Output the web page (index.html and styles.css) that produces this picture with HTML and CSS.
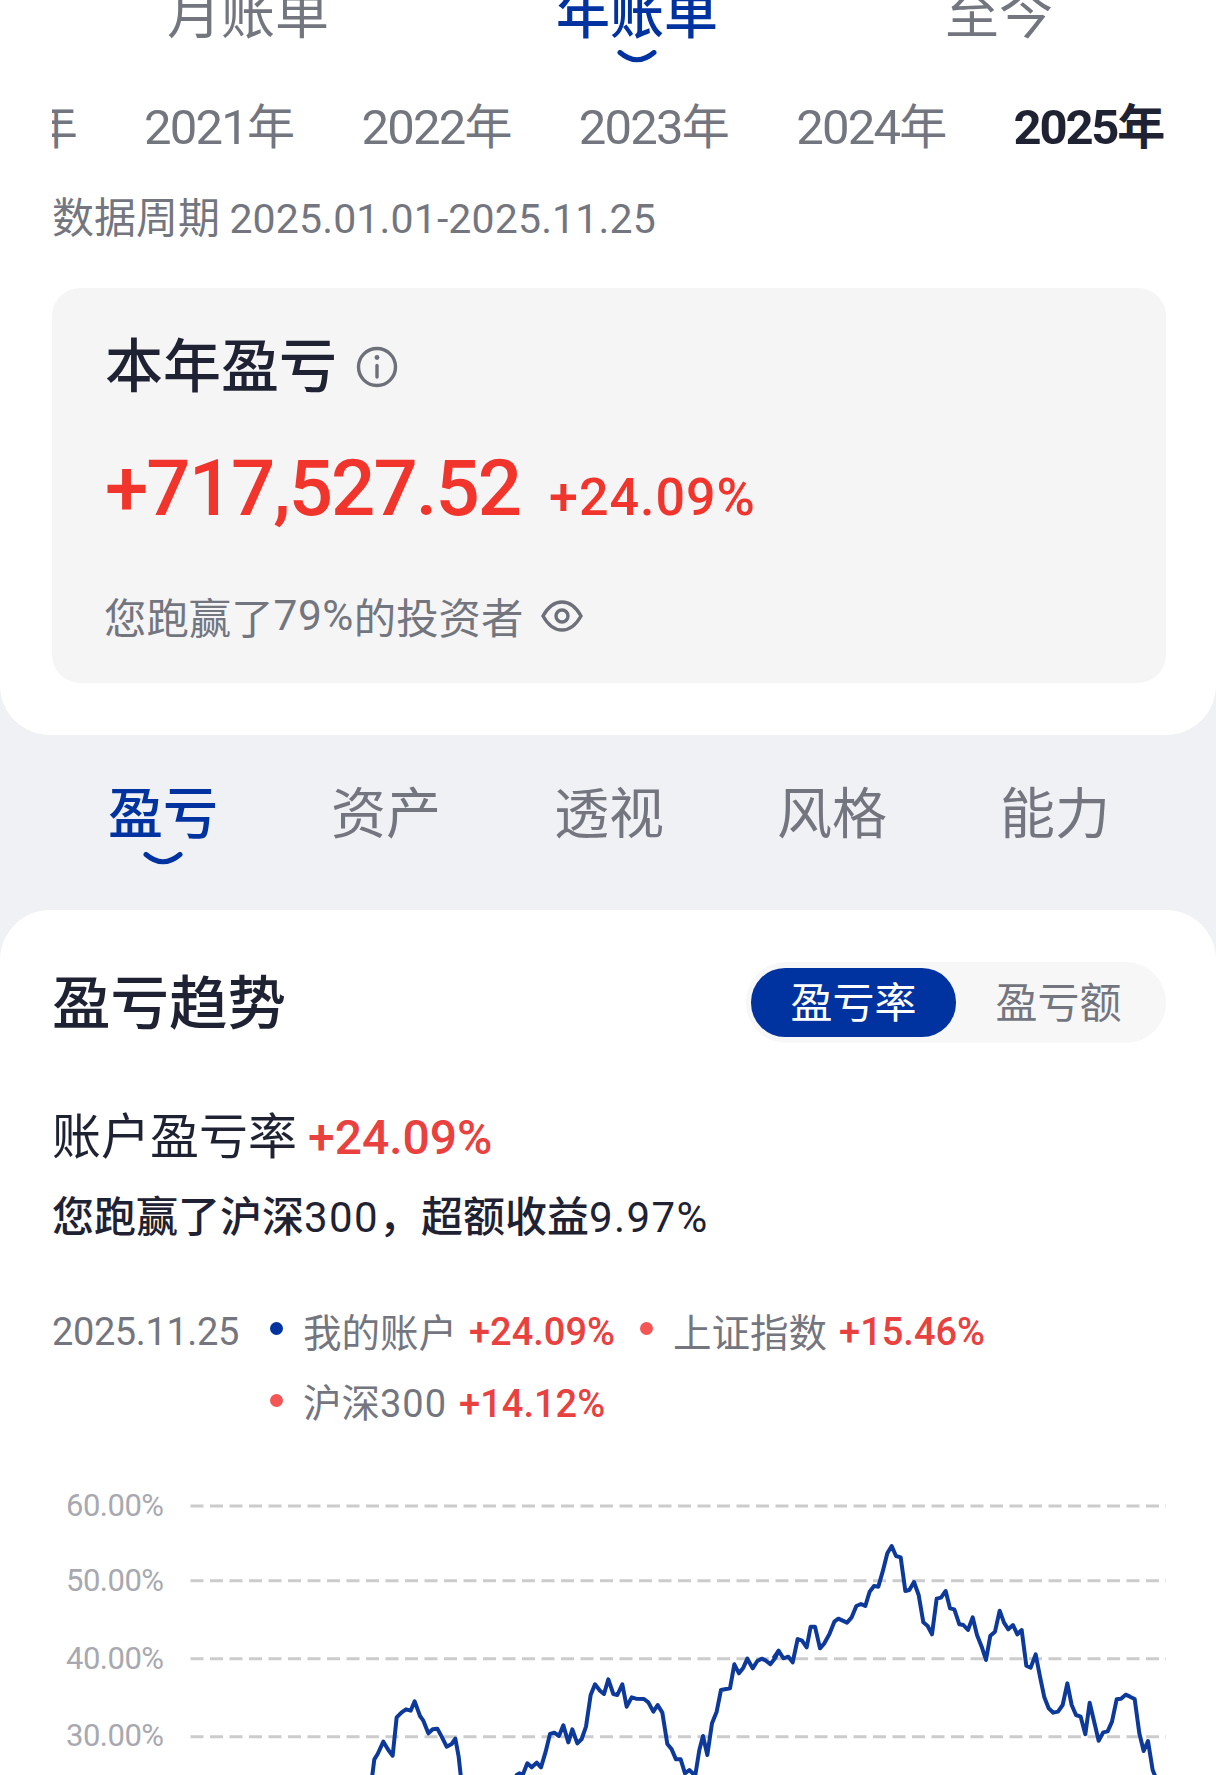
FILE: index.html
```html
<!DOCTYPE html>
<html lang="zh-CN">
<head>
<meta charset="utf-8">
<title>年账单</title>
<link rel="stylesheet" href="styles.css">
</head>
<body>
<div class="page">
  <section class="top">
    <nav class="period-tabs">
      <div class="period-tab">月账单</div>
      <div class="period-tab active">年账单
        <svg class="smile" viewBox="0 0 40 13"><path d="M3 2.5Q20 17 37 2.5" /></svg>
      </div>
      <div class="period-tab">至今</div>
    </nav>
    <div class="years">
      <div class="year"><span class="num">2020</span>年</div>
      <div class="year"><span class="num">2021</span>年</div>
      <div class="year"><span class="num">2022</span>年</div>
      <div class="year"><span class="num">2023</span>年</div>
      <div class="year"><span class="num">2024</span>年</div>
      <div class="year current"><span class="num">2025</span>年</div>
    </div>
    <p class="period">数据周期 <span class="num">2025.01.01-2025.11.25</span></p>
    <div class="summary">
      <div class="summary-title">本年盈亏
        <svg class="icon-info" viewBox="0 0 42 42"><circle cx="21" cy="21" r="18.5"/><path d="M21 19.5V31"/><circle class="dot" cx="21" cy="11.5" r="2.4"/></svg>
      </div>
      <div class="amount-row">
        <span class="num amount">+717,527.52</span>
        <span class="num amount-pct">+24.09%</span>
      </div>
      <div class="beat">您跑赢了<span class="num">79%</span>的投资者
        <svg class="icon-eye" viewBox="0 0 42 32"><path d="M2 16C7 7 13 2 21 2S35 7 40 16C35 25 29 30 21 30S7 25 2 16Z"/><circle cx="21" cy="16" r="6"/></svg>
      </div>
    </div>
  </section>

  <nav class="sub-tabs">
    <div class="sub-tab active">盈亏
      <svg class="smile" viewBox="0 0 40 13"><path d="M3 2.5Q20 17 37 2.5" /></svg>
    </div>
    <div class="sub-tab">资产</div>
    <div class="sub-tab">透视</div>
    <div class="sub-tab">风格</div>
    <div class="sub-tab">能力</div>
  </nav>

  <section class="trend">
    <header class="trend-head">
      <h2 class="trend-title">盈亏趋势</h2>
      <div class="toggle">
        <div class="toggle-item on">盈亏率</div>
        <div class="toggle-item">盈亏额</div>
      </div>
    </header>
    <div class="rate-line">账户盈亏率 <span class="num red">+24.09%</span></div>
    <div class="excess-line">您跑赢了沪深<span class="num">300</span>，超额收益<span class="num">9.97%</span></div>
    <div class="legend">
      <div class="legend-date num">2025.11.25</div>
      <div class="legend-items">
        <div class="legend-item"><i class="dot-mark blue"></i><span class="legend-label">我的账户</span><span class="num red">+24.09%</span></div>
        <div class="legend-item"><i class="dot-mark coral"></i><span class="legend-label">上证指数</span><span class="num red">+15.46%</span></div>
        <div class="legend-item"><i class="dot-mark coral"></i><span class="legend-label">沪深<span class="num">300</span></span><span class="num red">+14.12%</span></div>
      </div>
    </div>
    <svg class="chart" viewBox="52 1490 1114 285">
      <g class="axis">
        <text x="66" y="1515.5">60.00%</text>
        <text x="66" y="1590.5">50.00%</text>
        <text x="66" y="1668.5">40.00%</text>
        <text x="66" y="1746">30.00%</text>
      </g>
      <g class="grid">
        <path d="M190.5 1506H1166"/>
        <path d="M190.5 1580.7H1166"/>
        <path d="M190.5 1658.7H1166"/>
        <path d="M190.5 1736.7H1166"/>
      </g>
      <g class="line" transform="translate(340 1500) scale(.33333)">
        <polyline points="90,880 97,825 103,778 113,762 130,725 145,750 158,767 170,652 185,637 198,628 212,632 224,604 240,648 250,662 265,700 278,688 292,686 305,710 320,740 335,732 346,716 356,770 362,825 370,900"/>
        <polyline points="515,900 530,825 538,820 548,825 562,790 575,802 590,788 603,802 617,755 630,702 643,698 657,708 670,676 685,727 697,688 712,730 725,717 738,680 752,585 765,553 780,572 792,582 805,538 820,582 832,585 847,553 860,620 875,592 888,596 912,597 925,607 940,635 953,615 967,638 982,732 995,748 1008,778 1022,778 1035,820 1048,810 1060,822 1066,825 1078,750 1089,708 1102,765 1116,670 1130,635 1143,570 1170,565 1183,493 1197,520 1210,503 1222,476 1238,505 1252,483 1265,476 1278,482 1291,493 1305,475 1316,452"/>
      </g>
      <g class="line" transform="translate(776 1500) scale(.33333)">
        <polyline points="-8,475 8,452 22,475 37,470 50,487 65,417 78,422 92,442 104,380 117,380 132,445 145,430 160,403 175,365 187,356 200,362 213,368 227,352 241,318 255,312 268,318 281,275 294,258 307,260 320,215 334,160 347,138 360,168 374,172 388,273 400,270 414,246 428,285 442,367 455,378 468,403 482,296 495,293 509,273 522,325 535,328 550,373 562,375 576,390 590,352 603,405 617,440 630,480 643,407 657,395 671,332 684,368 697,388 711,375 724,403 737,390 751,497 764,503 779,463 792,530 805,592 818,625 832,638 846,635 860,615 874,550 887,615 900,645 914,650 928,703 941,608 968,722 982,697 995,694 1008,665 1022,598 1035,596 1049,584 1062,590 1076,597 1090,700 1103,753 1116,723 1130,810 1136,825 1145,900"/>
      </g>
    </svg>
  </section>
</div>
</body>
</html>
```

FILE: styles.css
```css
* { box-sizing: border-box; }

html, body { margin: 0; padding: 0; }

body {
  font-family: "Noto Sans CJK SC", "Noto Sans", sans-serif;
  color: #1f2233;
  background: #f0f1f5;
}

.page {
  width: 1216px;
  height: 1775px;
  overflow: hidden;
  background: #f0f1f5;
}

.num {
  font-family: "Roboto", sans-serif;
}

.red { color: #e94040; }

.top {
  height: 735px;
  background: #fff;
  border-radius: 0 0 50px 50px;
  padding-top: 1px;
}

.smile {
  display: block;
  width: 40px;
  height: 13px;
  fill: none;
  stroke: #0033a0;
  stroke-width: 5;
  stroke-linecap: round;
}

.period-tabs {
  display: flex;
  justify-content: space-between;
  align-items: flex-start;
  margin-top: -17px;
  padding: 0 163px 0 167px;
}

.period-tab {
  display: flex;
  flex-direction: column;
  align-items: center;
  font-size: 54px;
  line-height: 54px;
  color: #74767f;
}

.period-tab.active {
  color: #0033a0;
  font-weight: 500;
}

.period-tab .smile { margin-top: 12px; }

.years {
  display: flex;
  justify-content: flex-end;
  gap: 67px;
  margin: 32px 0 0 52px;
  padding-right: 52px;
  overflow: hidden;
}

.year {
  flex: 0 0 150.4px;
  min-width: 0;
  white-space: nowrap;
  font-size: 48px;
  line-height: 56px;
  color: #74767f;
}

.year .num {
  font-size: 49px;
  letter-spacing: -1.8px;
}

.year.current {
  color: #1f2233;
  font-weight: 700;
}

.year.current .num { letter-spacing: -2.2px; }

.period {
  margin: 34px 0 0 52px;
  font-size: 42px;
  line-height: 50px;
  color: #74767f;
}

.period .num {
  font-size: 41px;
  letter-spacing: .15px;
}

.summary {
  width: 1114px;
  height: 395px;
  margin: 44px 0 0 52px;
  padding: 44px 53px 0;
  border-radius: 28px;
  background: #f5f5f6;
}

.summary-title {
  display: flex;
  align-items: center;
  gap: 19px;
  font-size: 58px;
  line-height: 60px;
  font-weight: 500;
  color: #1f2233;
}

.icon-info {
  width: 42px;
  height: 42px;
  margin-top: 9px;
  fill: none;
  stroke: #6e7079;
  stroke-width: 3.4;
  stroke-linecap: round;
}

.icon-info .dot {
  fill: #6e7079;
  stroke: none;
}

.amount-row {
  display: flex;
  align-items: baseline;
  gap: 29px;
  margin-top: 57px;
  color: #f1352c;
}

.amount {
  font-size: 78px;
  line-height: 80px;
  font-weight: 500;
  letter-spacing: -2px;
}

.amount-pct {
  font-size: 52px;
  line-height: 60px;
  font-weight: 500;
  letter-spacing: 1px;
}

.beat {
  display: flex;
  align-items: center;
  margin-top: 62px;
  margin-left: -1px;
  font-size: 42.4px;
  line-height: 50px;
  color: #74767f;
}

.beat .num { letter-spacing: .5px; }

.icon-eye {
  width: 42px;
  height: 32px;
  margin-left: 18px;
  fill: none;
  stroke: #6e7079;
  stroke-width: 3.4;
}

.sub-tabs {
  display: flex;
  align-items: flex-start;
  gap: 113px;
  height: 175px;
  padding: 44px 0 0 108px;
}

.sub-tab {
  display: flex;
  flex-direction: column;
  align-items: center;
  font-size: 55px;
  line-height: 60px;
  color: #74767f;
}

.sub-tab.active {
  color: #0033a0;
  font-weight: 500;
}

.sub-tab .smile { margin-top: 13px; }

.trend {
  height: 865px;
  padding: 52px 50px 0 52px;
  background: #fff;
  border-radius: 50px 50px 0 0;
}

.trend-head {
  display: flex;
  justify-content: space-between;
  align-items: center;
}

.trend-title {
  margin: -8px 0 0;
  font-size: 58.5px;
  line-height: 64px;
  font-weight: 500;
  color: #1f2233;
}

.toggle {
  display: flex;
  width: 420px;
  height: 81px;
  padding: 6px 5px;
  border-radius: 40px;
  background: #f7f7f8;
}

.toggle-item {
  flex: 1;
  text-align: center;
  font-size: 42px;
  line-height: 63px;
  color: #74767f;
  border-radius: 34px;
}

.toggle-item.on {
  color: #fff;
  background: #0033a0;
}

.rate-line {
  margin-top: 62px;
  font-size: 49px;
  line-height: 56px;
  color: #1f2233;
}

.rate-line .num {
  font-size: 48px;
  font-weight: 500;
}

.excess-line {
  margin-top: 23px;
  font-size: 42px;
  line-height: 50px;
  font-weight: 500;
  color: #1f2233;
}

.excess-line .num {
  font-weight: 400;
  letter-spacing: 1.4px;
}

.legend {
  display: flex;
  align-items: flex-start;
  margin-top: 64px;
  font-size: 38.5px;
  line-height: 50px;
  color: #74767f;
}

.legend-date {
  flex: 0 0 218px;
  font-size: 38px;
  letter-spacing: -.4px;
}

.legend-items {
  display: flex;
  flex-wrap: wrap;
  gap: 20px 25px;
  flex: 1;
}

.legend-item {
  display: flex;
  align-items: center;
  white-space: nowrap;
}

.legend-item .num { font-size: 38px; }

.legend-label .num { letter-spacing: 1px; }

.legend-item .red { font-weight: 500; }

.dot-mark {
  width: 13px;
  height: 13px;
  margin-right: 20px;
  border-radius: 50%;
  transform: translateY(-4px);
}

.dot-mark.blue { background: #0033a0; }
.dot-mark.coral { background: #f45555; }

.legend-label {
  margin-right: 12px;
  transform: translateY(-2px);
}

.chart {
  display: block;
  width: 1114px;
  height: 285px;
  margin-top: 59px;
}

.axis text {
  font-family: "Roboto", sans-serif;
  font-size: 31px;
  letter-spacing: -.5px;
  fill: #a8a9b0;
}

.grid path {
  fill: none;
  stroke: #cccccc;
  stroke-width: 3;
  stroke-dasharray: 13 6.5;
}

.line polyline {
  fill: none;
  stroke: #0d3a9a;
  stroke-width: 12;
  stroke-linejoin: round;
}
```
